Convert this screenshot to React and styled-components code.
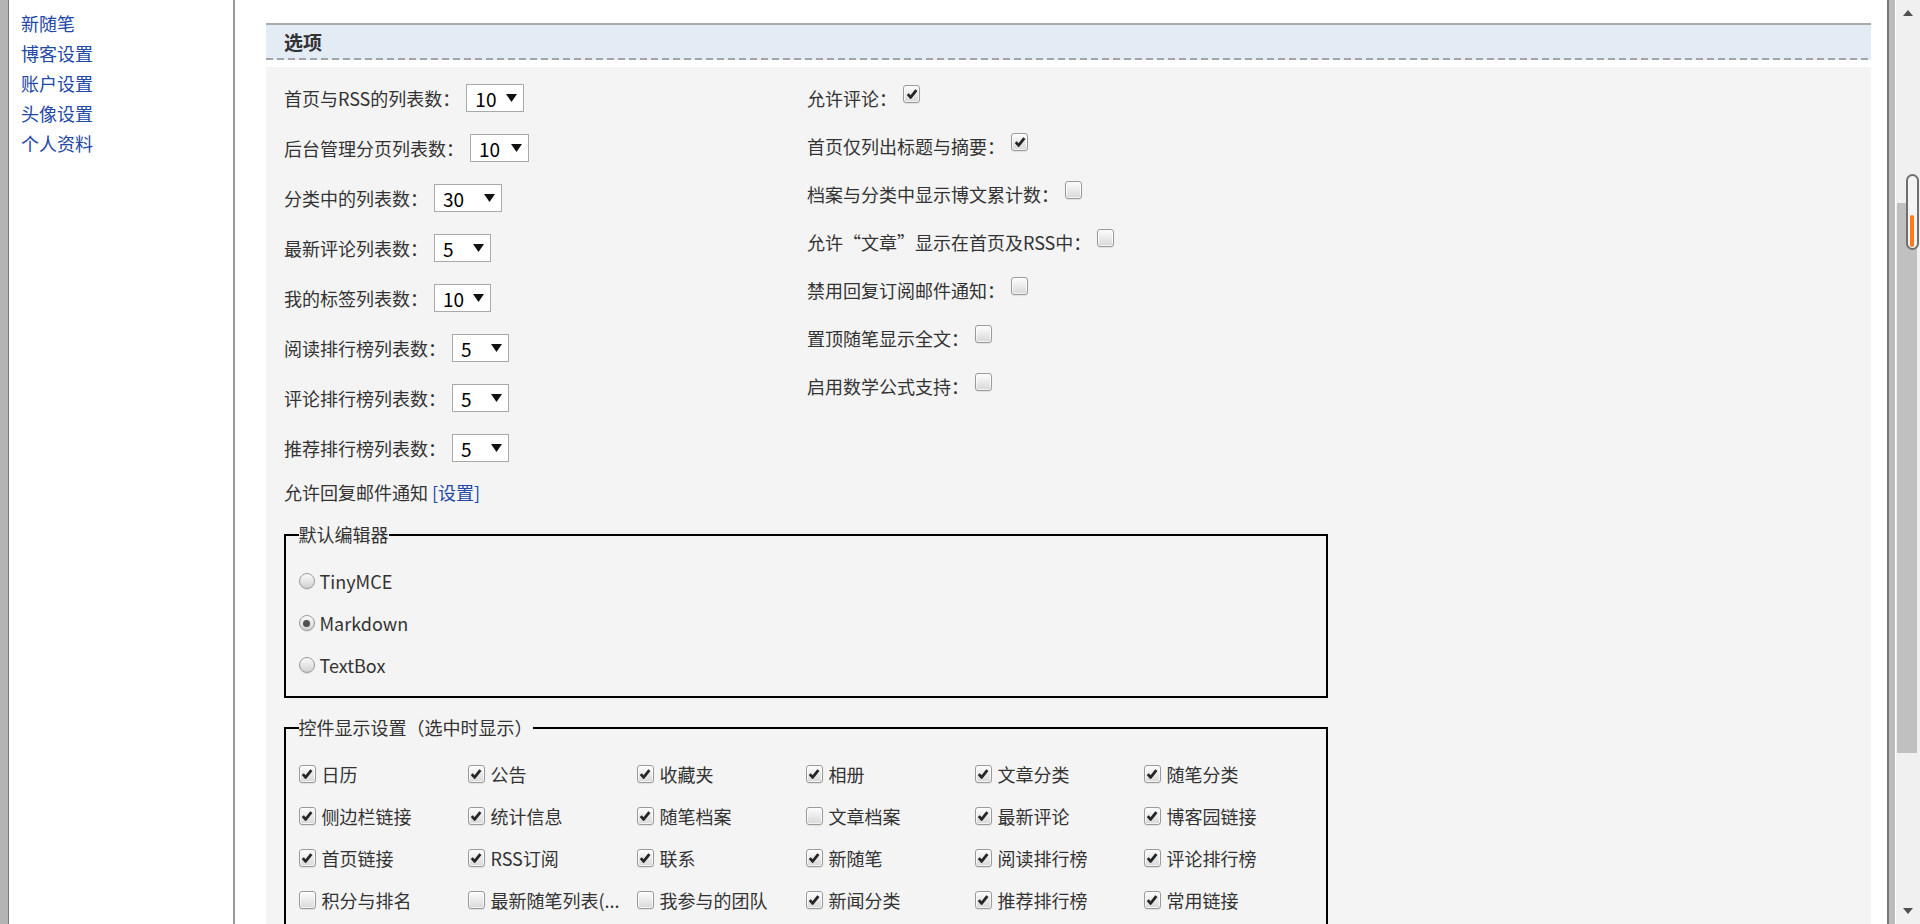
import React from "react";
import styled, { createGlobalStyle } from "styled-components";

const GlobalStyle = createGlobalStyle`
  html, body {
    margin: 0;
    padding: 0;
    height: 100%;
    overflow: hidden;
  }
  body {
    font-family: "Microsoft YaHei", "Noto Sans CJK SC", sans-serif;
    color: #333;
    background: #fff;
  }
`;

const Page = styled.div`
  display: flex;
  height: 100vh;
  overflow: hidden;
`;

const LeftEdge = styled.div`
  width: 8px;
  flex-shrink: 0;
  background: #b4b4b4;
  border-right: 1px solid #7a7a7a;
`;

const Sidebar = styled.nav`
  width: 226px;
  flex-shrink: 0;
  box-sizing: border-box;
  padding: 8px 0 0 12px;
  border-right: 2px solid #999;
  background: #fff;
`;

const SideLink = styled.a`
  display: block;
  font-size: 18px;
  line-height: 30px;
  color: #2248a8;
  text-decoration: none;
  white-space: nowrap;
`;

const Main = styled.main`
  flex: 1;
  min-width: 0;
  padding: 23px 16px 0 31px;
  overflow: hidden;
`;

const SectionHeader = styled.div`
  height: 33px;
  padding-left: 18px;
  border-top: 2px solid #aaa;
  background: #e3ebf5;
  font-size: 19px;
  font-weight: bold;
  line-height: 33px;
  color: #333;
`;

const DashedRule = styled.div`
  height: 2px;
  margin-bottom: 7px;
  background: repeating-linear-gradient(to right, #a4a4a4 0 7px, #e3ebf5 7px 11px);
`;

const OptionsBody = styled.div`
  background: #f4f4f4;
  padding: 17px 0 40px 18px;
`;

const TopGrid = styled.div`
  display: grid;
  grid-template-columns: 523px 1fr;
`;

const Column = styled.div`
  display: flex;
  flex-direction: column;
  gap: ${({ $gap }) => $gap}px;
`;

const FieldRow = styled.div`
  display: flex;
  align-items: center;
  gap: 6px;
  height: 28px;
`;

const Label = styled.span`
  font-size: 18px;
  line-height: 28px;
  white-space: nowrap;
  color: #333;
`;

const SelectBox = styled.div`
  width: ${({ $w }) => $w}px;
  height: 28px;
  box-sizing: border-box;
  display: flex;
  align-items: center;
  justify-content: space-between;
  padding: 0 6px 0 8px;
  border: 1px solid #a9a9a9;
  background: #fff;
  font-size: 19px;
  color: #000;
`;

const MailRow = styled.div`
  margin-top: -6px;
  font-size: 18px;
  line-height: 28px;
  color: #333;
`;

const TextLink = styled.a`
  color: #2248a8;
  text-decoration: none;
`;

const CheckRow = styled.div`
  display: flex;
  align-items: flex-start;
  gap: 6px;
  height: 28px;
`;

const Box = styled.span`
  width: 15px;
  height: 16px;
  flex-shrink: 0;
  margin-top: ${({ $top }) => $top || 0}px;
  display: inline-flex;
  align-items: center;
  justify-content: center;
  border: 1px solid #9a9a9a;
  border-radius: 3px;
  background: linear-gradient(#fdfdfd, #d8d8d8);
  box-shadow: inset 0 0 0 1px rgba(255, 255, 255, 0.7), 0 1px 1px rgba(0, 0, 0, 0.08);
`;

const Round = styled.span`
  width: 16px;
  height: 16px;
  flex-shrink: 0;
  box-sizing: border-box;
  display: inline-flex;
  align-items: center;
  justify-content: center;
  border: 1px solid #9a9a9a;
  border-radius: 50%;
  background: linear-gradient(#fafafa, #d2d2d2);
  box-shadow: 0 1px 1px rgba(0, 0, 0, 0.08);

  &::after {
    content: "";
    width: 7px;
    height: 7px;
    border-radius: 50%;
    background: ${({ $on }) => ($on ? "#505050" : "transparent")};
  }
`;

const Fieldset = styled.fieldset`
  width: 1044px;
  box-sizing: border-box;
  margin: ${({ $mt }) => $mt}px 0 0;
  padding: 0 12px 17px 12.5px;
  border: 2px solid #000;
  min-width: 0;
`;

const Legend = styled.legend`
  padding: 0;
  font-size: 18px;
  line-height: 23px;
  color: #333;
`;

const RadioList = styled.div`
  display: flex;
  flex-direction: column;
  gap: 14px;
  margin-top: 21px;
`;

const RadioRow = styled.div`
  display: flex;
  align-items: center;
  gap: 5px;
  height: 28px;
  font-size: 18px;
  color: #333;
`;

const ControlGrid = styled.div`
  display: grid;
  grid-template-columns: repeat(6, 169px);
  row-gap: 14px;
  margin-top: 21px;
`;

const GridItem = styled.div`
  display: flex;
  align-items: center;
  gap: 6px;
  height: 28px;
  font-size: 18px;
  color: #333;
  white-space: nowrap;
  overflow: hidden;
`;

const FrameEdge = styled.div`
  width: 6px;
  flex-shrink: 0;
  background: #bbb;
  border-left: 2px solid #777;
  border-right: 1px solid #fff;
`;

const Scrollbar = styled.div`
  position: relative;
  width: 24px;
  flex-shrink: 0;
  display: flex;
  flex-direction: column;
  background: #f0f0f0;
`;

const ScrollArrow = styled.div`
  height: 26px;
  display: flex;
  align-items: center;
  justify-content: center;
`;

const TrackGap = styled.div`
  height: ${({ $h }) => $h}px;
  flex: ${({ $flex }) => ($flex ? 1 : "none")};
`;

const Thumb = styled.div`
  height: 550px;
  margin: 0 3px 0 1px;
  background: #c0c0c0;
`;

const ScrollCapsule = styled.div`
  position: absolute;
  left: 10px;
  top: 174px;
  width: 9px;
  height: 72px;
  border: 2px solid #707070;
  border-radius: 7px;
  background: #f4f4f4;
`;

const CapsuleFill = styled.div`
  position: absolute;
  left: 2px;
  top: 39px;
  width: 4px;
  height: 32px;
  border-radius: 2px;
  background: #ff7a1a;
`;

const Caret = () => (
  <svg width="11" height="8" viewBox="0 0 11 8">
    <path d="M0 0 H11 L5.5 8 Z" fill="#111" />
  </svg>
);

const Tick = () => (
  <svg width="12" height="12" viewBox="0 0 12 12">
    <path d="M1.8 6.2 L4.6 9.4 L10.4 2.2" fill="none" stroke="#262626" strokeWidth="2.8" strokeLinejoin="round" />
  </svg>
);

const Checkbox = ({ checked, top }) => <Box $top={top}>{checked && <Tick />}</Box>;

const sideLinks = ["新随笔", "博客设置", "账户设置", "头像设置", "个人资料"];

const listRows = [
  ["首页与RSS的列表数：", "10", 58],
  ["后台管理分页列表数：", "10", 59],
  ["分类中的列表数：", "30", 68],
  ["最新评论列表数：", "5", 57],
  ["我的标签列表数：", "10", 57],
  ["阅读排行榜列表数：", "5", 57],
  ["评论排行榜列表数：", "5", 57],
  ["推荐排行榜列表数：", "5", 57],
];

const flagRows = [
  ["允许评论：", true],
  ["首页仅列出标题与摘要：", true],
  ["档案与分类中显示博文累计数：", false],
  ["允许“文章”显示在首页及RSS中：", false],
  ["禁用回复订阅邮件通知：", false],
  ["置顶随笔显示全文：", false],
  ["启用数学公式支持：", false],
];

const editors = [
  ["TinyMCE", false],
  ["Markdown", true],
  ["TextBox", false],
];

const controls = [
  ["日历", true], ["公告", true], ["收藏夹", true], ["相册", true], ["文章分类", true], ["随笔分类", true],
  ["侧边栏链接", true], ["统计信息", true], ["随笔档案", true], ["文章档案", false], ["最新评论", true], ["博客园链接", true],
  ["首页链接", true], ["RSS订阅", true], ["联系", true], ["新随笔", true], ["阅读排行榜", true], ["评论排行榜", true],
  ["积分与排名", false], ["最新随笔列表(...", false], ["我参与的团队", false], ["新闻分类", true], ["推荐排行榜", true], ["常用链接", true],
];

const App = () => {
  return (
    <Page>
      <GlobalStyle />
      <LeftEdge />
      <Sidebar>
        {sideLinks.map((t) => (
          <SideLink key={t} href="#">{t}</SideLink>
        ))}
      </Sidebar>
      <Main>
        <SectionHeader>选项</SectionHeader>
        <DashedRule />
        <OptionsBody>
          <TopGrid>
            <Column $gap={22}>
              {listRows.map(([label, value, w]) => (
                <FieldRow key={label}>
                  <Label>{label}</Label>
                  <SelectBox $w={w}>
                    <span>{value}</span>
                    <Caret />
                  </SelectBox>
                </FieldRow>
              ))}
              <MailRow>
                允许回复邮件通知 <TextLink href="#">[设置]</TextLink>
              </MailRow>
            </Column>
            <Column $gap={20}>
              {flagRows.map(([label, on]) => (
                <CheckRow key={label}>
                  <Label>{label}</Label>
                  <Checkbox checked={on} top={1} />
                </CheckRow>
              ))}
            </Column>
          </TopGrid>

          <Fieldset $mt={17}>
            <Legend>默认编辑器</Legend>
            <RadioList>
              {editors.map(([name, on]) => (
                <RadioRow key={name}>
                  <Round $on={on} />
                  {name}
                </RadioRow>
              ))}
            </RadioList>
          </Fieldset>

          <Fieldset $mt={18}>
            <Legend>控件显示设置（选中时显示）</Legend>
            <ControlGrid>
              {controls.map(([name, on]) => (
                <GridItem key={name}>
                  <Checkbox checked={on} />
                  {name}
                </GridItem>
              ))}
            </ControlGrid>
          </Fieldset>
        </OptionsBody>
      </Main>
      <FrameEdge />
      <Scrollbar>
        <ScrollArrow>
          <svg width="10" height="6" viewBox="0 0 10 6"><path d="M0 6 L5 0 L10 6 Z" fill="#505050" /></svg>
        </ScrollArrow>
        <TrackGap $h={177} />
        <Thumb />
        <TrackGap $flex />
        <ScrollArrow>
          <svg width="10" height="6" viewBox="0 0 10 6"><path d="M0 0 L10 0 L5 6 Z" fill="#505050" /></svg>
        </ScrollArrow>
        <ScrollCapsule>
          <CapsuleFill />
        </ScrollCapsule>
      </Scrollbar>
    </Page>
  );
};

export default App;
